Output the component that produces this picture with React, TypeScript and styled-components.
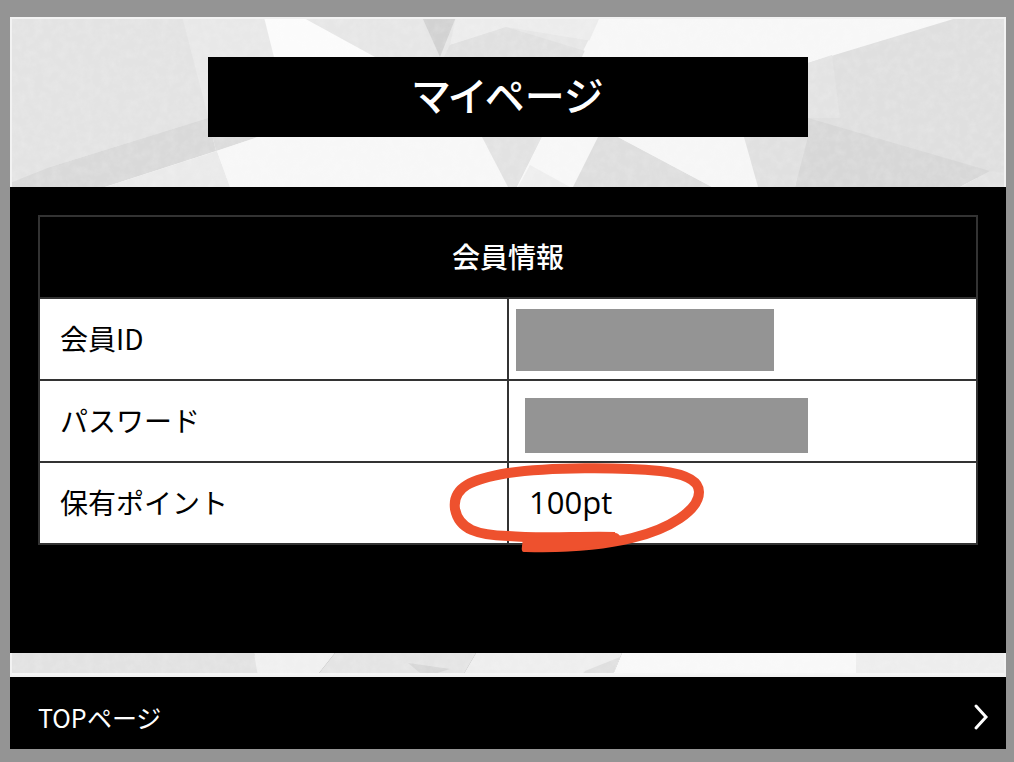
import React from 'react';
import styled, { createGlobalStyle } from 'styled-components';

const GlobalStyle = createGlobalStyle`
  * { box-sizing: border-box; }
  body {
    margin: 0;
    background: #949494;
    font-family: "Noto Sans CJK JP", "Noto Sans", sans-serif;
    color: #000;
  }
`;

const Page = styled.div`
  padding: 17px 8px 13px 10px;
`;

const Hero = styled.header`
  position: relative;
  display: flex;
  justify-content: center;
  padding: 40px 0 50px;
  background: #f7f7f7;
`;

const Texture = styled.svg`
  position: absolute;
  inset: 0;
  width: 100%;
  height: 100%;
`;

const Title = styled.h1`
  position: relative;
  width: 600px;
  max-width: 90%;
  margin: 0;
  padding-bottom: 6px;
  background: #000;
  color: #fff;
  font-size: 40px;
  font-weight: 500;
  line-height: 74px;
  text-align: center;
  font-feature-settings: "palt";
`;

const Panel = styled.main`
  padding: 28px 28px 108px;
  background: #000;
`;

const InfoTable = styled.table`
  width: 100%;
  table-layout: fixed;
  border-collapse: collapse;
  font-size: 28px;
  line-height: 40px;
`;

const TableTitle = styled.th`
  height: 82px;
  padding: 0 0 2px;
  border: 2px solid #333;
  color: #fff;
  font-weight: 500;
`;

const Label = styled.th`
  height: 82px;
  padding: 0 20px 2px;
  border: 2px solid #333;
  background: #fff;
  font-weight: 400;
  text-align: left;
`;

const Value = styled.td<{ $masked?: boolean }>`
  position: relative;
  height: 82px;
  padding: ${(p) => (p.$masked ? '0' : '0 20px 2px')};
  border: 2px solid #333;
  background: #fff;
  vertical-align: ${(p) => (p.$masked ? 'top' : 'middle')};
`;

const Points = styled.span`
  font-family: "Open Sans", "Noto Sans", sans-serif;
  font-size: 31px;
`;

const Mask = styled.span<{ $w: number; $h: number; $top: number; $left: number }>`
  display: block;
  width: ${(p) => p.$w}px;
  height: ${(p) => p.$h}px;
  margin: ${(p) => p.$top}px 0 0 ${(p) => p.$left}px;
  background: #949494;
`;

const Marker = styled.svg`
  position: absolute;
  left: -65px;
  top: -5px;
  width: 266px;
  height: 98px;
  pointer-events: none;
`;

const Strip = styled.div`
  position: relative;
  height: 24px;
`;

const FooterLink = styled.a`
  display: flex;
  align-items: center;
  justify-content: space-between;
  height: 72px;
  padding: 8px 16px 0 28px;
  background: #000;
  color: #fff;
  font-size: 25px;
  line-height: 40px;
  text-decoration: none;
  font-feature-settings: "palt";
`;

const Chevron = styled.svg`
  width: 18px;
  height: 30px;
`;

type Facet = [string, string];

const heroFacets: Facet[] = [
  ['0,0 256,0 266,40 198,120 0,170', '#e3e3e3'],
  ['172,0 255,0 266,40 198,100', '#e8e8e8'],
  ['0,166 40,150 198,101 206,134 95,170 0,170', '#d9d9d9'],
  ['0,0 172,0 198,101 40,150 0,162', '#e3e3e3'],
  ['198,101 206,134 248,120 248,101', '#dcdcdc'],
  ['95,170 207,134 220,170', '#eaeaea'],
  ['207,134 248,120 470,120 496,170 220,170', '#f7f7f7'],
  ['254,0 295,0 368,40 264,40', '#fbfbfb'],
  ['292,0 590,0 570,40 365,40', '#e6e6e6'],
  ['412,0 446,0 430,40', '#d2d2d2'],
  ['446,0 590,0 582,24 497,10 440,28', '#ececec'],
  ['440,28 496,10 582,36 578,40 434,40', '#e0e0e0'],
  ['590,0 950,0 798,46 576,46 572,40', '#f7f7f7'],
  ['798,46 950,0 996,0 996,170 798,110', '#dfdfdf'],
  ['798,46 822,38 830,101 798,101', '#e3e3e3'],
  ['798,101 980,154 950,170 785,170', '#d7d7d7'],
  ['950,170 980,154 996,156 996,170', '#e2e2e2'],
  ['472,120 532,120 507,170 498,170', '#e2e2e2'],
  ['532,120 588,120 563,170 507,170', '#f7f7f7'],
  ['520,148 560,170 508,170', '#eeeeee'],
  ['588,120 608,120 702,170 563,170', '#dedede'],
  ['608,120 734,120 748,170 702,170', '#f6f6f6'],
  ['734,120 798,120 785,170 748,170', '#e0e0e0'],
];

const stripFacets: Facet[] = [
  ['0,0 244,0 252,24 0,24', '#e2e2e2'],
  ['244,0 325,0 306,24 248,24', '#f0f0f0'],
  ['325,0 466,0 452,24 306,24', '#e4e4e4'],
  ['398,10 440,16 415,24', '#d6d6d6'],
  ['466,0 612,0 602,24 452,24', '#eeeeee'],
  ['575,18 610,4 602,24 570,24', '#dfdfdf'],
  ['612,0 846,0 846,24 602,24', '#f8f8f8'],
  ['846,0 996,0 996,24 846,24', '#ededed'],
  ['0,20 996,20 996,24 0,24', '#f5f5f5'],
];

function Facets({ facets, height, id, edge }: { facets: Facet[]; height: number; id: string; edge: string }) {
  return (
    <Texture viewBox={`0 0 996 ${height}`} preserveAspectRatio="none" aria-hidden="true">
      <defs>
        <filter id={id} x="0" y="0" width="100%" height="100%">
          <feTurbulence type="fractalNoise" baseFrequency="0.12" numOctaves="3" seed="4" />
          <feColorMatrix values="0 0 0 0 1  0 0 0 0 1  0 0 0 0 1  1.4 0 0 0 -0.5" />
        </filter>
      </defs>
      {facets.map(([points, fill]) => (
        <polygon key={points} points={points} fill={fill} />
      ))}
      <rect width="996" height={height} filter={`url(#${id})`} opacity="0.2" />
      <path d={edge} fill="none" stroke="#f2f2f2" strokeWidth="2" />
    </Texture>
  );
}

export default function App() {
  return (
    <>
      <GlobalStyle />
      <Page>
        <Hero>
          <Facets facets={heroFacets} height={170} id="hero-grain" edge="M1 170V1H995V170" />
          <Title>マイページ</Title>
        </Hero>
        <Panel>
          <InfoTable>
            <thead>
              <tr>
                <TableTitle colSpan={2}>会員情報</TableTitle>
              </tr>
            </thead>
            <tbody>
              <tr>
                <Label scope="row">会員ID</Label>
                <Value $masked>
                  <Mask $w={258} $h={62} $top={10} $left={7} />
                </Value>
              </tr>
              <tr>
                <Label scope="row">パスワード</Label>
                <Value $masked>
                  <Mask $w={283} $h={55} $top={17} $left={16} />
                </Value>
              </tr>
              <tr>
                <Label scope="row">保有ポイント</Label>
                <Value>
                  <Points>100pt</Points>
                  <Marker viewBox="444 458 266 98" aria-hidden="true">
                    <path
                      d="M615 537C580 536 540 539 508 536C478 535 459 530 455 509C452 487 472 479 508 473C550 467 620 467 660 471C686 474 699 481 699 492C699 510 670 529 632 538C600 546 565 548 526 547"
                      fill="none"
                      stroke="#ee512e"
                      strokeWidth="10"
                      strokeLinejoin="round"
                    />
                    <path
                      d="M523 538L615 533Q619 533 621 538L612 543L570 551L524 552Q521 552 522 546Z"
                      fill="#ee512e"
                    />
                  </Marker>
                </Value>
              </tr>
            </tbody>
          </InfoTable>
        </Panel>
        <Strip>
          <Facets facets={stripFacets} height={24} id="strip-grain" edge="M1 0V23H995V0" />
        </Strip>
        <FooterLink href="#top">
          TOPページ
          <Chevron viewBox="0 0 18 30" aria-hidden="true">
            <path d="M4 4L14 15L4 26" fill="none" stroke="#fff" strokeWidth="3" strokeLinecap="round" />
          </Chevron>
        </FooterLink>
      </Page>
    </>
  );
}
